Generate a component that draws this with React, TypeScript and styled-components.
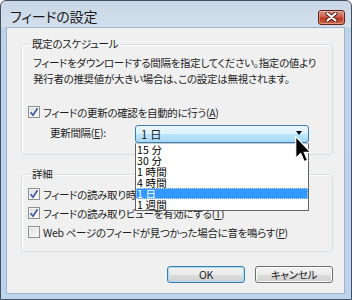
import React from 'react';
import styled, { createGlobalStyle } from 'styled-components';

const GlobalStyle = createGlobalStyle`
  html, body {
    margin: 0;
    padding: 0;
    background: #ffffff;
  }
  body {
    font-family: "Noto Sans CJK JP", "Noto Sans", sans-serif;
    font-size: 10.5px;
    letter-spacing: -0.3px;
    color: #1e1e1e;
    font-feature-settings: "palt";
  }
`;

const intervals = ['15 分', '30 分', '1 時間', '4 時間', '1 日', '1 週間'];
const selected = '1 日';

const Window = styled.div`
  position: relative;
  width: 352px;
  height: 300px;
  box-sizing: border-box;
  display: flex;
  flex-direction: column;
  border: 1px solid #45505c;
  border-radius: 6px 6px 0 0;
  background: linear-gradient(#c9d7e6 0px, #d3dfec 26px, #bcd3ec 27px, #bcd4ee 100%);
  overflow: hidden;
`;

const TitleBar = styled.div`
  height: 26px;
  flex: none;
  display: flex;
  align-items: center;
  justify-content: space-between;
  padding: 0 6px 0 9px;
`;

const Title = styled.div`
  font-size: 14px;
  letter-spacing: -0.2px;
  color: #1b1b1b;
  margin-top: 3px;
`;

const CloseButton = styled.div`
  width: 27px;
  height: 15px;
  margin-top: 6px;
  box-sizing: border-box;
  border: 1px solid #5e2219;
  border-radius: 3px;
  display: flex;
  align-items: center;
  justify-content: center;
  background: linear-gradient(#dd9a88 0%, #cc5b47 45%, #b8391f 55%, #cf6a4c 100%);
  box-shadow: inset 0 0 0 1px rgba(255, 210, 195, 0.45);
`;

const Client = styled.div`
  flex: 1;
  margin: 0 6px 5px 5px;
  border: 1px solid #9fb3ca;
  background: #f0f0f0;
  padding: 9px 11px 10px 14px;
  display: flex;
  flex-direction: column;
`;

const Group = styled.fieldset<{ $gap: number }>`
  margin: 0 0 ${(p) => p.$gap}px 0;
  padding: 0 6px 11px 6px;
  border: 1px solid #d5dfe5;
  border-radius: 3px;
  box-shadow: inset 1px 1px 0 #ffffff;
  min-width: 0;
`;

const Legend = styled.legend`
  padding: 0 2px;
  margin-left: 2px;
  line-height: 14px;
  color: #1e1e1e;
`;

const Description = styled.p`
  margin: 4px 0 17px 5px;
  line-height: 16px;
  white-space: nowrap;
`;

const Rows = styled.div`
  margin-top: 5px;
  display: flex;
  flex-direction: column;
  gap: 3px;
`;

const CheckRow = styled.label`
  display: flex;
  align-items: center;
  gap: 3px;
  height: 16px;
  white-space: nowrap;
`;

const Box = styled.span`
  width: 12px;
  height: 12px;
  flex: none;
  box-sizing: border-box;
  border: 1px solid #8e8f8f;
  background: linear-gradient(135deg, #dcdcdc, #fcfcfc);
  box-shadow: inset 0 0 0 1px #f4f4f4;
  display: flex;
  align-items: center;
  justify-content: center;
`;

const Key = styled.span`
  text-decoration: underline;
  text-underline-offset: 1px;
`;

const IntervalRow = styled.div`
  display: flex;
  align-items: center;
  margin-top: 5px;
  padding-left: 22px;
  height: 18px;
`;

const IntervalLabel = styled.span`
  width: 85px;
  margin-top: -3px;
`;

const ComboWrap = styled.div`
  position: relative;
  width: 174px;
  height: 18px;
`;

const Combo = styled.div`
  height: 18px;
  box-sizing: border-box;
  border: 1px solid #3c7fb1;
  border-radius: 3px;
  background: linear-gradient(#ecf7fd 0%, #dbf1fc 50%, #bee6fd 51%, #a6d8f4 100%);
  display: flex;
  align-items: center;
  justify-content: space-between;
  padding: 0 6px 0 5px;
  font-size: 11.5px;
  letter-spacing: 0;
  white-space: pre;
`;

const Arrow = styled.span`
  width: 0;
  height: 0;
  border-left: 3.5px solid transparent;
  border-right: 3.5px solid transparent;
  border-top: 4px solid #000000;
  margin-top: -2px;
`;

const List = styled.ul`
  position: absolute;
  top: 18px;
  left: 0;
  width: 174px;
  box-sizing: border-box;
  margin: 0;
  padding: 0;
  list-style: none;
  background: #ffffff;
  border: 1px solid #646464;
  border-top-color: #c8c8c8;
  z-index: 2;
`;

const Item = styled.li<{ $active: boolean }>`
  height: 11px;
  line-height: 11px;
  padding-left: 1px;
  font-size: 10.5px;
  letter-spacing: 0.2px;
  color: ${(p) => (p.$active ? '#ffffff' : '#000000')};
  background: ${(p) => (p.$active ? '#3399ff' : 'transparent')};
  outline: ${(p) => (p.$active ? '1px dotted #c6e2ff' : 'none')};
  outline-offset: -1px;
  white-space: pre;
`;

const Buttons = styled.div`
  display: flex;
  justify-content: flex-end;
  gap: 10px;
  margin-top: 1px;
`;

const Button = styled.div<{ $default?: boolean }>`
  width: 78px;
  height: 17px;
  box-sizing: border-box;
  border: 1px solid ${(p) => (p.$default ? '#3c7fb1' : '#707070')};
  border-radius: 3px;
  background: linear-gradient(#f2f2f2 0%, #ebebeb 50%, #dddddd 51%, #cfcfcf 100%);
  box-shadow: inset 0 0 0 1px ${(p) => (p.$default ? '#a9dcf6' : '#fbfbfb')};
  display: flex;
  align-items: center;
  justify-content: center;
  color: #222222;
`;

const Cursor = styled.svg`
  position: absolute;
  left: 294px;
  top: 135px;
  z-index: 3;
`;

const Check: React.FC = () => (
  <svg width="10" height="10" viewBox="0 0 10 10">
    <path d="M1.5 5.2 L4 8.2 L8.6 1.2" fill="none" stroke="#3d5a9e" strokeWidth="1.7" />
  </svg>
);

const CheckBox: React.FC<{ checked?: boolean; children: React.ReactNode }> = ({ checked, children }) => (
  <CheckRow>
    <Box>{checked && <Check />}</Box>
    <span>{children}</span>
  </CheckRow>
);

export default function App() {
  return (
    <>
      <GlobalStyle />
      <Window>
        <TitleBar>
          <Title>フィードの設定</Title>
          <CloseButton>
            <svg width="13" height="10" viewBox="0 0 13 10">
              <path d="M2.5 1.5 L10.5 8.5 M10.5 1.5 L2.5 8.5" stroke="#4a1810" strokeWidth="4" strokeLinecap="round" />
              <path d="M2.5 1.5 L10.5 8.5 M10.5 1.5 L2.5 8.5" stroke="#ffffff" strokeWidth="2.2" strokeLinecap="round" />
            </svg>
          </CloseButton>
        </TitleBar>
        <Client>
          <Group $gap={12}>
            <Legend>既定のスケジュール</Legend>
            <Description>
              フィードをダウンロードする間隔を指定してください。指定の値より
              <br />
              発行者の推奨値が大きい場合は、この設定は無視されます。
            </Description>
            <CheckBox checked>
              フィードの更新の確認を自動的に行う(<Key>A</Key>)
            </CheckBox>
            <IntervalRow>
              <IntervalLabel>
                更新間隔(<Key>E</Key>):
              </IntervalLabel>
              <ComboWrap>
                <Combo>
                  <span>{selected}</span>
                  <Arrow />
                </Combo>
                <List>
                  {intervals.map((item) => (
                    <Item key={item} $active={item === selected}>
                      {item}
                    </Item>
                  ))}
                </List>
              </ComboWrap>
            </IntervalRow>
          </Group>
          <Group $gap={13}>
            <Legend>詳細</Legend>
            <Rows>
              <CheckBox checked>
                フィードの読み取り時(<Key>M</Key>)
              </CheckBox>
              <CheckBox checked>
                フィードの読み取りビューを有効にする(<Key>T</Key>)
              </CheckBox>
              <CheckBox>
                Web ページのフィードが見つかった場合に音を鳴らす(<Key>P</Key>)
              </CheckBox>
            </Rows>
          </Group>
          <Buttons>
            <Button $default>OK</Button>
            <Button>キャンセル</Button>
          </Buttons>
        </Client>
        <Cursor width="17" height="27" viewBox="0 0 12.5 20">
          <path
            d="M0.5 0.5 L0.5 16.5 L4.2 13 L6.8 19 L9.3 18 L6.8 12.2 L11.8 12.2 Z"
            fill="#000000"
            stroke="#ffffff"
            strokeWidth="0.9"
            strokeLinejoin="miter"
          />
        </Cursor>
      </Window>
    </>
  );
}
